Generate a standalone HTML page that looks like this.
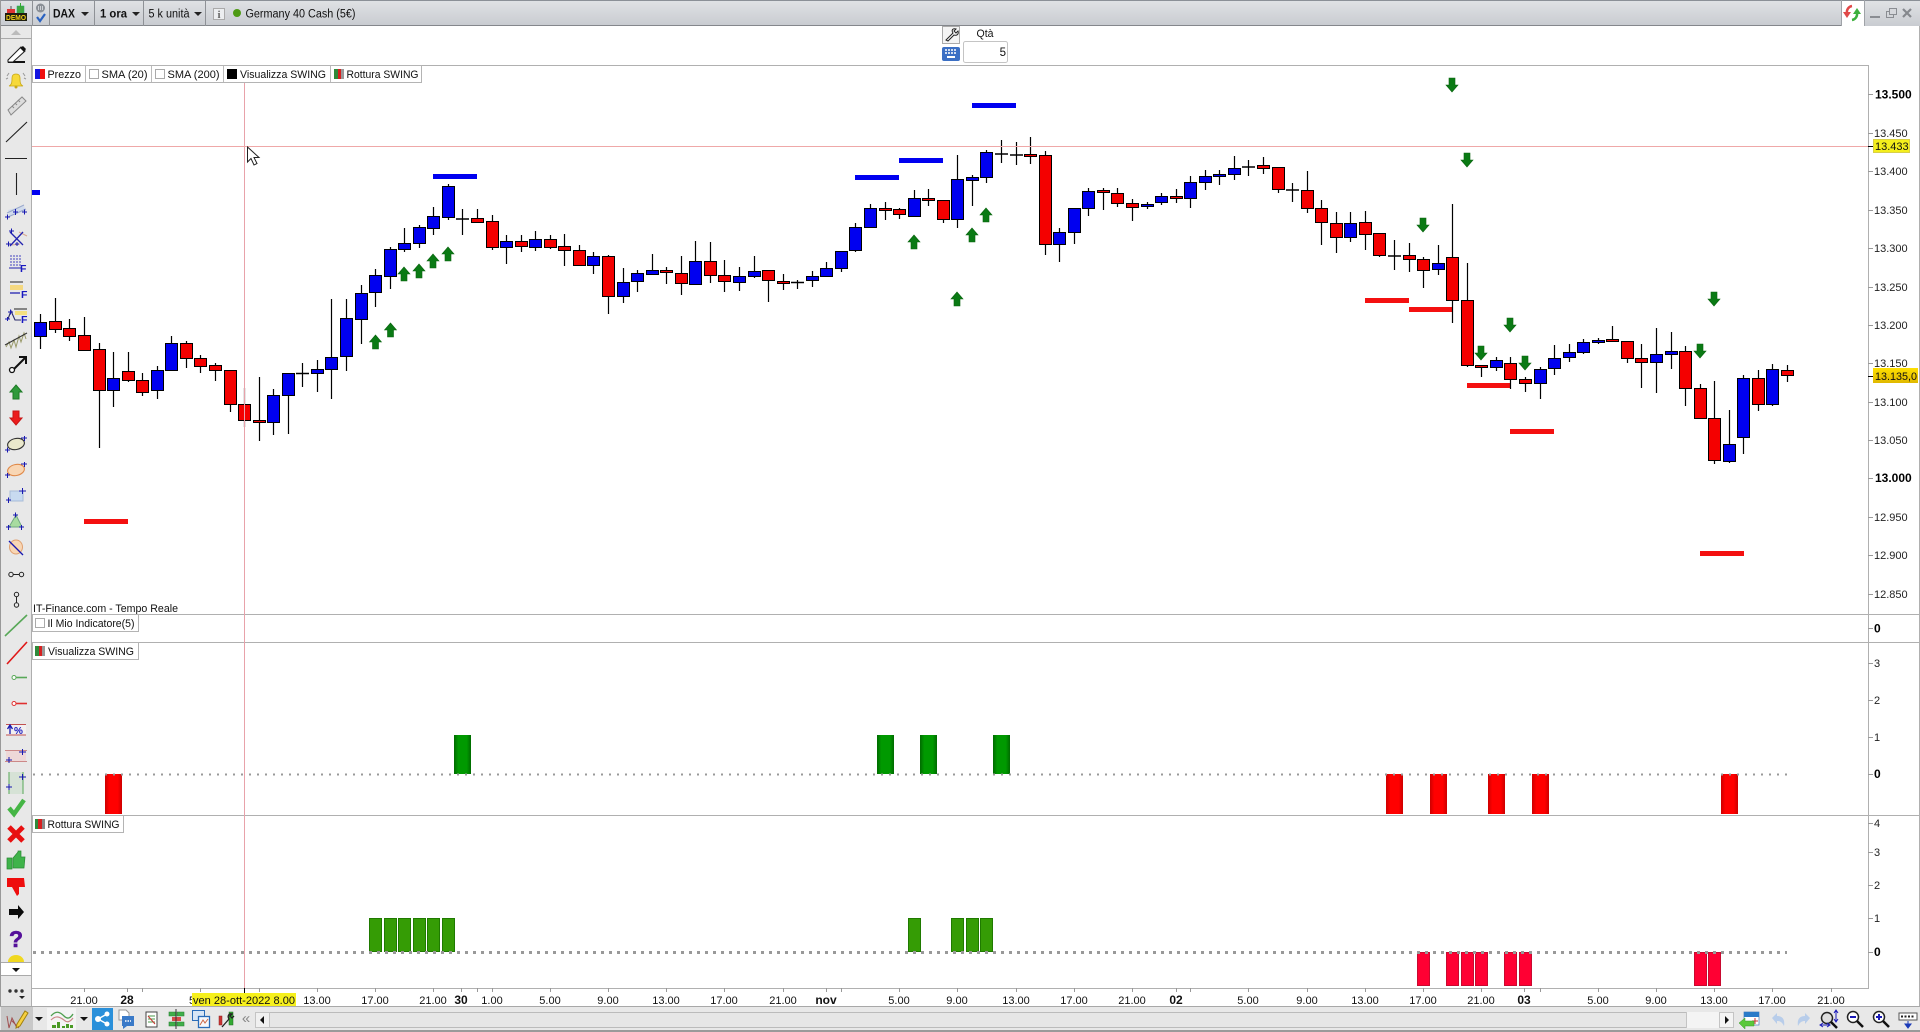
<!DOCTYPE html>
<html><head><meta charset="utf-8"><title>Chart</title>
<style>
html,body{margin:0;padding:0;background:#fff;overflow:hidden}
svg{display:block}
text{font-family:"Liberation Sans",sans-serif;font-size:11px;fill:#111}
.b{font-weight:bold}
.xl text{text-anchor:middle;font-size:11px}
.yl text{font-size:11px;fill:#222}
.yb text{font-size:12px;font-weight:bold;fill:#000}
</style></head><body>
<svg width="1920" height="1032" viewBox="0 0 1920 1032" xmlns="http://www.w3.org/2000/svg">
<defs>
<linearGradient id="tb" x1="0" y1="0" x2="0" y2="1"><stop offset="0" stop-color="#e0e2e5"/><stop offset="1" stop-color="#c9ccd1"/></linearGradient>
<linearGradient id="gb" x1="0" y1="0" x2="1" y2="0"><stop offset="0" stop-color="#006a00"/><stop offset=".25" stop-color="#009900"/><stop offset=".75" stop-color="#009900"/><stop offset="1" stop-color="#006a00"/></linearGradient>
<linearGradient id="rb" x1="0" y1="0" x2="1" y2="0"><stop offset="0" stop-color="#cc0000"/><stop offset=".25" stop-color="#ff0000"/><stop offset=".75" stop-color="#ff0000"/><stop offset="1" stop-color="#cc0000"/></linearGradient>
<linearGradient id="tag2" x1="0" y1="0" x2="0" y2="1"><stop offset="0" stop-color="#ffe000"/><stop offset="1" stop-color="#e0b800"/></linearGradient>
<path id="up" d="M0 0L6 7H3V14H-3V7H-6Z" fill="#0a7a14" stroke="#0a6410" stroke-width=".6"/>
<path id="dn" d="M-3 0H3V7H6L0 14L-6 7H-3Z" fill="#0a7a14" stroke="#0a6410" stroke-width=".6"/>
</defs>

<rect width="1920" height="1032" fill="#fff"/>

<!-- top toolbar -->
<rect x="0" y="0" width="1841" height="25" fill="url(#tb)"/>
<rect x="0" y="0" width="1920" height="1" fill="#8b9097"/>
<rect x="0" y="25" width="1841" height="1" fill="#84878c"/>
<rect x="1841" y="1" width="23" height="25" fill="#fff"/>
<rect x="1864" y="1" width="56" height="25" fill="url(#tb)"/>
<rect x="1841" y="0" width="1" height="26" fill="#a0a3a8"/>
<rect x="1864" y="0" width="1" height="26" fill="#a0a3a8"/>
<g fill="#8e9196">
<rect x="32" y="0" width="1" height="26"/><rect x="49" y="0" width="1" height="26"/><rect x="94" y="0" width="1" height="26"/><rect x="143" y="0" width="1" height="26"/><rect x="205" y="0" width="1" height="26"/>
</g>
<!-- demo icon -->
<rect x="7" y="9" width="8" height="5" fill="#d33"/><path d="M11 6V9" stroke="#555"/>
<rect x="17" y="6" width="7" height="7" fill="#3fa83f" stroke="#2a6" stroke-width=".5"/><path d="M20.500 3V7" stroke="#3a3"/>
<rect x="5" y="13" width="22" height="8" fill="#1d1d10"/>
<text x="16" y="20" text-anchor="middle" class="b" style="font-size:7.500px;fill:#f2d21a" textLength="20" lengthAdjust="spacingAndGlyphs">DEMO</text>
<!-- connection icon -->
<circle cx="40.500" cy="8" r="4.500" fill="#8a8f96"/><path d="M38.500 6V10M40.500 6V10M42.500 6V10" stroke="#dfe2e6" stroke-width=".8"/>
<path d="M37 17L40 21L45 14" fill="none" stroke="#2a62c0" stroke-width="2.200"/>
<text x="53" y="17.500" class="b" style="font-size:11.500px" textLength="22" lengthAdjust="spacingAndGlyphs">DAX</text>
<path d="M81 12H89L85 16Z" fill="#222"/>
<text x="100" y="17.500" class="b" style="font-size:11.500px" textLength="27" lengthAdjust="spacingAndGlyphs">1 ora</text>
<path d="M132 12H140L136 16Z" fill="#222"/>
<text x="148.500" y="17.500" style="font-size:11.500px" textLength="41" lengthAdjust="spacingAndGlyphs">5 k unità</text>
<path d="M194 12H202L198 16Z" fill="#222"/>
<rect x="213.500" y="8.500" width="11" height="11" fill="#eceef0" stroke="#aaa"/>
<text x="219" y="18" text-anchor="middle" class="b" style="font-size:11px;font-family:'Liberation Serif',serif;fill:#666">i</text>
<circle cx="237" cy="13" r="4" fill="#4e9a14"/>
<text x="245.500" y="17.500" style="font-size:11.500px" textLength="110" lengthAdjust="spacingAndGlyphs">Germany 40 Cash (5€)</text>
<!-- refresh -->
<path d="M1852 6A6 6 0 0 0 1847 13" fill="none" stroke="#e04848" stroke-width="2.500"/><path d="M1843 12H1851L1847 18Z" fill="#e04848"/>
<path d="M1852 20A6 6 0 0 0 1857 13" fill="none" stroke="#3db03d" stroke-width="2.500"/><path d="M1853 14H1861L1857 8Z" fill="#3db03d"/>
<!-- window buttons -->
<rect x="1870" y="16" width="10" height="2" fill="#8a8d92"/>
<rect x="1886.500" y="11.500" width="7" height="6" fill="none" stroke="#8a8d92"/><rect x="1889.500" y="8.500" width="7" height="6" fill="#d6d8dc" stroke="#8a8d92"/>
<path d="M1903 9L1911 17M1911 9L1903 17" stroke="#85888d" stroke-width="2.200"/>

<!-- order area -->
<rect x="942.500" y="26.500" width="17" height="17" fill="#f4f4f4" stroke="#aaa"/>
<path d="M946 40L953 33C951 30 953 28 956 29L954 31L956 33L958 31C959 34 957 36 954 35L948 41Z" fill="#fff" stroke="#222"/>
<text x="985" y="37" text-anchor="middle" style="font-size:11px" textLength="17" lengthAdjust="spacingAndGlyphs">Qtà</text>
<rect x="942" y="47" width="18" height="14" rx="2" fill="#3b6fc4"/>
<path d="M945 50H957M945 53H957" stroke="#fff" stroke-width="1.500" stroke-dasharray="2 1"/><rect x="947" y="56" width="8" height="2" fill="#fff"/>
<rect x="963.500" y="41.500" width="44" height="21" rx="2" fill="#fff" stroke="#c4c4c4"/>
<text x="1006" y="56" text-anchor="end" style="font-size:11.500px">5</text>

<!-- left toolbar -->
<rect x="0" y="26" width="32" height="980" fill="#e8e8e8"/>
<rect x="0" y="0" width="1" height="1032" fill="#999"/>
<rect x="31" y="26" width="1" height="980" fill="#aeaeae"/>
<path d="M11 35L16 30L21 35Z" fill="#bbb"/><rect x="1" y="38" width="30" height="1" fill="#aaa"/>

<!-- tool icons -->
<path d="M8 62H25" stroke="#111" stroke-width="2"/><path d="M8 60L21 47L25 51L13 62H8Z" fill="#fff" stroke="#222" stroke-width="1.100"/><path d="M20 48L23 46L26 49L24 52Z" fill="#111"/>
<path d="M9 86C12 85 12 81 12 78C12 75 14 74 16 74C18 74 20 75 20 78C20 81 20 85 23 86Z" fill="#f6d93a" stroke="#c9a814" stroke-width=".8"/><circle cx="16" cy="87" r="1.500" fill="#c9a814"/><path d="M7 76L9 73M25 76L23 73M6 79L8 78M26 79L24 78" stroke="#999"/>
<path d="M8 110L22 97L26 101L11 115Z" fill="#ddd" stroke="#888"/><path d="M12 106L14 108M15 103L17 105M18 100L20 102" stroke="#888"/>
<path d="M6 142L27 122" stroke="#222" stroke-width="1.100"/>
<path d="M5 158.500H27" stroke="#222" stroke-width="1.100"/>
<path d="M16.500 173V195" stroke="#222" stroke-width="1.100"/>
<path d="M8 210L24 206L26 211L9 216Z" fill="#c8d6ee" opacity=".7"/><path d="M7 213L24 205M8 217L26 209" stroke="#99a8cc"/>
<path d="M5 217H10M7.500 214.500V219.500M13 212H18M15.500 209V215M22 212H27M24.500 209.500V214.500" stroke="#1818b0" stroke-width="1"/>
<path d="M19 232L27 236M12 245L20 244" stroke="#d8a890"/><path d="M10 232L23 245M23 232L10 246" stroke="#2424b0" stroke-width="1.300"/>
<path d="M9 231H14M11.500 228.500V233.500M6 244H11M8.500 241.500V246.500M15 244H19M17 242V246" stroke="#1818b0" stroke-width="1"/>
<path d="M10 256H22M10 259H22M10 262H22M10 265H22" stroke="#4444c0" stroke-dasharray="2 1"/><path d="M9 268H21" stroke="#2222b0"/>
<text x="20" y="272" class="b" style="font-size:10.500px;fill:#1818c0">F</text>
<path d="M10 282H23" stroke="#222"/><rect x="10" y="285" width="13" height="5" fill="#f4d880"/><path d="M10 293H20" stroke="#2222b0" stroke-width="1.300"/>
<text x="21" y="298" class="b" style="font-size:10.500px;fill:#1818c0">F</text>
<path d="M8 319L11 311L15 320H21" fill="none" stroke="#2a2a6a" stroke-width="1.100"/><path d="M14 309H27" stroke="#222"/><rect x="15" y="311" width="12" height="4" fill="#f4e080"/>
<path d="M8 312H13M10.500 309.500V314.500M5 319H10M7.500 317V321" stroke="#1818b0"/>
<text x="21" y="323" class="b" style="font-size:10.500px;fill:#1818c0">F</text>
<path d="M6 347L9 342L11 348L14 340L16 347L19 336L21 342L24 333L26 339" fill="none" stroke="#9a9a6a"/><path d="M5 345L27 333" stroke="#333" stroke-width="1"/>
<path d="M14 369L25 358M19 357H26V364" fill="none" stroke="#111" stroke-width="2"/><circle cx="12" cy="370" r="2.500" fill="#fff" stroke="#111" stroke-width="1.300"/>
<path d="M16 385L22 392H19V399H13V392H10Z" fill="#2f9a3a" stroke="#1c7a24"/>
<path d="M13 411H19V418H22L16 425L10 418H13Z" fill="#ec1c1c" stroke="#c81414"/>
<ellipse cx="16" cy="444" rx="8.500" ry="5.500" fill="#eae8cc" stroke="#333" stroke-width="1.100" transform="rotate(-12 16 444)"/><path d="M21 438H27M24.500 436V441M5 450H10M7.500 447.500V452.500" stroke="#1818b0"/>
<ellipse cx="16" cy="470" rx="8.500" ry="5.500" fill="#f8d6b4" stroke="#e08a4a" stroke-width="1.100" transform="rotate(-12 16 470)"/><path d="M21 464H27M24.500 462V467M5 475H10M7.500 473V478" stroke="#1818b0"/>
<rect x="10" y="491" width="13" height="10" fill="#c8daf0" stroke="#a8bcd8"/><path d="M19 491H26M22.500 488V494M6 500H11M8.500 497.500V503" stroke="#1818b0"/>
<path d="M16 515L22 527H9Z" fill="#a8dca0" stroke="#70a880"/><path d="M13 515H18M15.500 512.500V517.500M6 527H11M8.500 525V530M19 527H24M21.500 525V530" stroke="#1818b0"/>
<ellipse cx="16" cy="547" rx="6.500" ry="7" fill="#f8d6b4" stroke="#e0a070"/><path d="M9 541L23 555" stroke="#1818b0" stroke-width="1.300"/>
<g fill="none" stroke="#222"><circle cx="11" cy="574.500" r="2.200"/><circle cx="21.500" cy="574.500" r="2.200"/><path d="M13 574.500H19.500"/>
<circle cx="16.500" cy="594.500" r="2.200"/><circle cx="16.500" cy="605" r="2.200"/><path d="M16.500 597V603"/></g>
<path d="M5 636L27 615" stroke="#58a858" stroke-width="1.600"/>
<path d="M7 664L27 642" stroke="#e01818" stroke-width="1.600"/>
<path d="M16 677.500H27" stroke="#58a858" stroke-width="1.600"/><circle cx="14" cy="677.500" r="2" fill="#fff" stroke="#58a858"/>
<path d="M16 703.500H27" stroke="#e03030" stroke-width="1.600"/><circle cx="14" cy="703.500" r="2" fill="#fff" stroke="#e03030"/>
<rect x="6" y="724" width="20" height="11" fill="#f2f0f0"/><path d="M6 724.500H26M6 735H26" stroke="#c05050"/><path d="M10 734V726M7.500 729L10 725L12.500 729" fill="none" stroke="#1818b0" stroke-width="1.300"/>
<text x="14" y="734" class="b" style="font-size:10px;fill:#1818c0">%</text>
<rect x="6" y="751" width="20" height="10" fill="#eed8d8"/><path d="M5 750.500H27M5 761.500H27" stroke="#c88"/><path d="M19 752H26M22.500 749V755M6 760H12M9 757V763" stroke="#1818b0"/>
<rect x="9" y="772" width="14" height="22" fill="#d6e2d6"/><path d="M9 772V794M23 772V794" stroke="#58a858"/><path d="M19 777H26M22.500 774V780M6 787H12M9 784V790" stroke="#1818b0"/>
<path d="M9 808L14 814L24 800" fill="none" stroke="#45b545" stroke-width="4.500"/>
<path d="M9 827L23 841M23 827L9 841" stroke="#e81010" stroke-width="5"/>
<path d="M7 858H12V869H7ZM13 858L18 852L18 851H21L21 857H25L24 868H13Z" fill="#3fb34a" stroke="#2a8a34" stroke-width=".7"/>
<path d="M7 878H24L25 887H19L19 894L17 896L12 887H7Z" fill="#ee0d0d"/>
<path d="M9 909H18V905L24 912L18 919V915H9Z" fill="#0a0a0a"/>
<text x="16" y="947" text-anchor="middle" class="b" style="font-size:23px;fill:#55109a;stroke:#55109a;stroke-width:.6">?</text>
<path d="M8 962A8 7 0 0 1 24 962Z" fill="#f0d820"/>
<rect x="1" y="962" width="30" height="13" fill="#fff"/><rect x="1" y="962" width="30" height="1" fill="#aaa"/>
<path d="M12 968H20L16 972Z" fill="#111"/><rect x="1" y="975" width="30" height="1" fill="#aaa"/>
<circle cx="10" cy="991" r="1.700" fill="#333"/><circle cx="16" cy="991" r="1.700" fill="#333"/><circle cx="22" cy="991" r="1.700" fill="#333"/><path d="M19 996H25L22 999Z" fill="#222"/>

<!-- grid frame -->
<g fill="#b0b0b0">
<rect x="32" y="65" width="1836" height="1"/>
<rect x="32" y="614" width="1888" height="1"/>
<rect x="32" y="642" width="1888" height="1"/>
<rect x="32" y="815" width="1888" height="1"/>
<rect x="32" y="988" width="1837" height="1"/>
<rect x="1868" y="65" width="1" height="924"/>
<rect x="1919" y="26" width="1" height="980"/>
</g>

<!-- indicator bars -->
<g fill="url(#rb)">
<rect x="105" y="774" width="17" height="40"/><rect x="1386" y="774" width="17" height="40"/><rect x="1430" y="774" width="17" height="40"/><rect x="1488" y="774" width="17" height="40"/><rect x="1532" y="774" width="17" height="40"/><rect x="1721" y="774" width="17" height="40"/>
</g>
<g fill="url(#gb)">
<rect x="454" y="735" width="17" height="39"/><rect x="877" y="735" width="17" height="39"/><rect x="920" y="735" width="17" height="39"/><rect x="993" y="735" width="17" height="39"/>
</g>
<g fill="#359c05" stroke="#1f7a00">
<rect x="369.500" y="918.500" width="12" height="33"/><rect x="384.500" y="918.500" width="12" height="33"/><rect x="398.500" y="918.500" width="12" height="33"/><rect x="413.500" y="918.500" width="12" height="33"/><rect x="427.500" y="918.500" width="12" height="33"/><rect x="442.500" y="918.500" width="12" height="33"/>
<rect x="908.500" y="918.500" width="12" height="33"/><rect x="951.500" y="918.500" width="12" height="33"/><rect x="966.500" y="918.500" width="12" height="33"/><rect x="980.500" y="918.500" width="12" height="33"/>
</g>
<g fill="#ff0033" stroke="#c80a30">
<rect x="1417.500" y="952.500" width="12" height="33"/><rect x="1446.500" y="952.500" width="12" height="33"/><rect x="1461.500" y="952.500" width="12" height="33"/><rect x="1475.500" y="952.500" width="12" height="33"/><rect x="1504.500" y="952.500" width="12" height="33"/><rect x="1519.500" y="952.500" width="12" height="33"/><rect x="1694.500" y="952.500" width="12" height="33"/><rect x="1708.500" y="952.500" width="12" height="33"/>
</g>
<!-- dotted zero lines -->
<path d="M33 774.500H1787" stroke="#999" stroke-width="2" stroke-dasharray="2 6"/>
<path d="M33 952.500H1787" stroke="#999" stroke-width="3" stroke-dasharray="3 5"/>

<!-- signal lines -->
<g fill="#0000f0">
<rect x="32" y="190" width="8" height="5"/><rect x="433" y="174" width="44" height="5"/><rect x="855" y="175" width="44" height="5"/><rect x="899" y="158" width="44" height="5"/><rect x="972" y="103" width="44" height="5"/>
</g>
<g fill="#f41010">
<rect x="84" y="519" width="44" height="5"/><rect x="1365" y="298" width="44" height="5"/><rect x="1409" y="307" width="44" height="5"/><rect x="1467" y="383" width="44" height="5"/><rect x="1510" y="429" width="44" height="5"/><rect x="1700" y="551" width="44" height="5"/>
</g>

<!-- wicks -->
<path fill="none" stroke="#000" stroke-width="1.200" d="M40.500 314V349M55.500 298V333M69.500 319V341M84.500 317V351M99.500 343V448M113.500 352V407M128.500 352V382M142.500 373V396M157.500 366V399M171.500 336V370M186.500 341V368M200.500 355V373M215.500 363V381M230.500 370V412M244.500 388V427M259.500 377V441M273.500 389V435M288.500 373V434M302.500 363V387M317.500 360V392M331.500 299V399M346.500 299V371M361.500 285V344M375.500 269V307M390.500 247V289M404.500 228V252M419.500 225V248M433.500 207V235M448.500 184V220M462.500 209V235M477.500 209V223M492.500 215V250M506.500 235V264M521.500 235V252M535.500 231V251M550.500 235V249M564.500 234V266M579.500 245V266M593.500 252V274M608.500 255V314M623.500 268V303M637.500 270V292M652.500 254V274M666.500 267V284M681.500 256V295M695.500 241V285M710.500 242V283M724.500 260V292M739.500 267V291M754.500 256V278M768.500 270V302M783.500 274V290M797.500 280V289M812.500 271V287M826.500 262V276M841.500 251V272M855.500 223V252M870.500 204V228M885.500 202V220M899.500 208V219M914.500 190V217M928.500 189V206M943.500 200V223M957.500 155V228M972.500 175V206M986.500 150V183M1001.500 140V163M1016.500 142V165M1030.500 137V164M1045.500 151V255M1059.500 228V262M1074.500 208V244M1088.500 188V216M1103.500 188V210M1117.500 188V207M1132.500 199V221M1147.500 202V209M1161.500 193V205M1176.500 189V203M1190.500 176V208M1205.500 170V190M1219.500 170V185M1234.500 156V180M1248.500 160V176M1263.500 157V174M1278.500 167V193M1292.500 183V202M1307.500 171V213M1321.500 200V245M1336.500 212V253M1350.500 212V242M1365.500 211V250M1379.500 233V257M1394.500 240V270M1409.500 243V272M1423.500 257V288M1438.500 245V275M1452.500 204V323M1467.500 263V367M1481.500 365V377M1496.500 357V371M1510.500 357V389M1525.500 377V392M1540.500 367V399M1554.500 345V375M1569.500 344V362M1583.500 339V354M1598.500 338V344M1612.500 326V342M1627.500 341V363M1641.500 344V388M1656.500 328V393M1671.500 332V369M1685.500 346V406M1700.500 384V418M1714.500 381V464M1729.500 410V463M1743.500 375V454M1758.500 370V411M1772.500 364V406M1787.500 365V382"/>
<!-- doji -->
<path fill="none" stroke="#000" stroke-width="1.600" d="M296 373.500h13M456 219h13M791 282.500h13M995 154h13M1010 155h13M1242 167h13M1286 190h13M1388 256h13"/>

<!-- blue bodies -->
<path fill="#0000f0" stroke="#000" stroke-width="1" d="M34.500 322.500h12v14h-12zM107.500 378.500h12v12h-12zM151.500 370.500h12v20h-12zM165.500 343.500h12v27h-12zM267.500 395.500h12v27h-12zM282.500 373.500h12v22h-12zM311.500 369.500h12v4h-12zM325.500 357.500h12v12h-12zM340.500 318.500h12v38h-12zM355.500 293.500h12v26h-12zM369.500 275.500h12v17h-12zM384.500 249.500h12v27h-12zM398.500 243.500h12v6h-12zM413.500 227.500h12v16h-12zM427.500 216.500h12v12h-12zM442.500 186.500h12v31h-12zM500.500 241.500h12v6h-12zM529.500 239.500h12v8h-12zM587.500 256.500h12v9h-12zM617.500 282.500h12v14h-12zM631.500 273.500h12v8h-12zM646.500 270.500h12v4h-12zM689.500 261.500h12v23h-12zM733.500 276.500h12v6h-12zM748.500 271.500h12v5h-12zM806.500 276.500h12v4h-12zM820.500 268.500h12v8h-12zM835.500 251.500h12v17h-12zM849.500 227.500h12v23h-12zM864.500 208.500h12v19h-12zM908.500 198.500h12v18h-12zM951.500 179.500h12v40h-12zM966.500 177.500h12v3h-12zM980.500 152.500h12v25h-12zM1053.500 232.500h12v12h-12zM1068.500 208.500h12v24h-12zM1082.500 191.500h12v17h-12zM1141.500 204.500h12v2h-12zM1155.500 196.500h12v6h-12zM1184.500 182.500h12v16h-12zM1199.500 176.500h12v6h-12zM1213.500 174.500h12v2h-12zM1228.500 168.500h12v6h-12zM1344.500 223.500h12v14h-12zM1432.500 263.500h12v6h-12zM1490.500 360.500h12v7h-12zM1534.500 369.500h12v14h-12zM1548.500 358.500h12v10h-12zM1563.500 352.500h12v5h-12zM1577.500 342.500h12v10h-12zM1592.500 340.500h12v2h-12zM1650.500 354.500h12v8h-12zM1665.500 351.500h12v3h-12zM1723.500 444.500h12v17h-12zM1737.500 378.500h12v59h-12zM1766.500 369.500h12v35h-12z"/>
<!-- red bodies -->
<path fill="#f40000" stroke="#000" stroke-width="1" d="M49.500 321.500h12v8h-12zM63.500 328.500h12v8h-12zM78.500 335.500h12v15h-12zM93.500 349.500h12v41h-12zM122.500 371.500h12v9h-12zM136.500 380.500h12v12h-12zM180.500 343.500h12v15h-12zM194.500 358.500h12v8h-12zM209.500 365.500h12v5h-12zM224.500 370.500h12v34h-12zM238.500 404.500h12v16h-12zM253.500 420.500h12v2h-12zM471.500 218.500h12v4h-12zM486.500 221.500h12v26h-12zM515.500 241.500h12v5h-12zM544.500 239.500h12v8h-12zM558.500 246.500h12v4h-12zM573.500 250.500h12v15h-12zM602.500 256.500h12v40h-12zM660.500 270.500h12v2h-12zM675.500 273.500h12v10h-12zM704.500 261.500h12v14h-12zM718.500 275.500h12v6h-12zM762.500 270.500h12v10h-12zM777.500 281.500h12v2h-12zM879.500 208.500h12v2h-12zM893.500 209.500h12v5h-12zM922.500 198.500h12v2h-12zM937.500 200.500h12v19h-12zM1024.500 154.500h12v2h-12zM1039.500 155.500h12v89h-12zM1097.500 190.500h12v2h-12zM1111.500 193.500h12v10h-12zM1126.500 203.500h12v4h-12zM1170.500 196.500h12v2h-12zM1257.500 165.500h12v3h-12zM1272.500 167.500h12v22h-12zM1301.500 190.500h12v18h-12zM1315.500 208.500h12v14h-12zM1330.500 223.500h12v14h-12zM1359.500 222.500h12v12h-12zM1373.500 233.500h12v22h-12zM1403.500 255.500h12v4h-12zM1417.500 259.500h12v11h-12zM1446.500 257.500h12v43h-12zM1461.500 300.500h12v65h-12zM1475.500 365.500h12v2h-12zM1504.500 363.500h12v16h-12zM1519.500 379.500h12v4h-12zM1606.500 339.500h12v2h-12zM1621.500 341.500h12v17h-12zM1635.500 358.500h12v4h-12zM1679.500 351.500h12v37h-12zM1694.500 388.500h12v30h-12zM1708.500 418.500h12v42h-12zM1752.500 378.500h12v26h-12zM1781.500 370.500h12v5h-12z"/>

<!-- arrows -->
<use href="#up" x="375.500" y="335"/><use href="#up" x="390.500" y="323"/><use href="#up" x="404" y="267"/><use href="#up" x="419" y="264"/><use href="#up" x="433" y="254"/><use href="#up" x="448" y="247"/><use href="#up" x="914" y="235"/><use href="#up" x="972" y="228"/><use href="#up" x="986" y="208"/><use href="#up" x="957" y="292"/>
<use href="#dn" x="1452" y="78"/><use href="#dn" x="1467" y="153"/><use href="#dn" x="1423" y="218"/><use href="#dn" x="1510" y="318"/><use href="#dn" x="1481" y="346"/><use href="#dn" x="1525" y="356"/><use href="#dn" x="1714" y="292"/><use href="#dn" x="1700" y="344"/>

<!-- crosshair -->
<rect x="244" y="83" width="1" height="905" fill="#e8a2aa"/>
<rect x="32" y="146" width="1836" height="1" fill="#efa8a8"/>

<!-- cursor -->
<path d="M247.500 147V162L251 158.500L254 165L257 163.500L254 157.500H259Z" fill="#fff" stroke="#222"/>

<!-- legend top -->
<rect x="32.500" y="65.500" width="389" height="17" fill="#fff" stroke="#b4b4b4"/>
<path d="M85.500 66V82M151.500 66V82M223.500 66V82M330.500 66V82" stroke="#bbb"/>
<rect x="35" y="69" width="5" height="10" fill="#1414e0"/><rect x="40" y="69" width="5" height="10" fill="#f01010"/>
<text x="47.500" y="78" textLength="33.500" lengthAdjust="spacingAndGlyphs">Prezzo</text>
<rect x="89.500" y="69.500" width="9" height="9" fill="#fff" stroke="#aaa"/>
<text x="101.500" y="78" textLength="46" lengthAdjust="spacingAndGlyphs">SMA (20)</text>
<rect x="155.500" y="69.500" width="9" height="9" fill="#fff" stroke="#aaa"/>
<text x="167.500" y="78" textLength="52" lengthAdjust="spacingAndGlyphs">SMA (200)</text>
<rect x="227" y="69" width="10" height="10" fill="#000"/>
<text x="240" y="78" textLength="86" lengthAdjust="spacingAndGlyphs">Visualizza SWING</text>
<rect x="334" y="69" width="4" height="10" fill="#2f8a3a"/><rect x="338" y="69" width="3" height="10" fill="#d62020"/><rect x="341" y="69" width="3" height="10" fill="#999"/>
<text x="346.500" y="78" textLength="72" lengthAdjust="spacingAndGlyphs">Rottura SWING</text>

<text x="33" y="612" textLength="145" lengthAdjust="spacingAndGlyphs">IT-Finance.com - Tempo Reale</text>

<rect x="32.500" y="614.500" width="106" height="17" fill="#fff" stroke="#b4b4b4"/>
<rect x="35.500" y="618.500" width="9" height="9" fill="#fff" stroke="#aaa"/>
<text x="47.500" y="627" textLength="87" lengthAdjust="spacingAndGlyphs">Il Mio Indicatore(5)</text>
<rect x="32.500" y="642.500" width="106" height="17" fill="#fff" stroke="#b4b4b4"/>
<rect x="35" y="646" width="4" height="10" fill="#2f8a3a"/><rect x="39" y="646" width="3" height="10" fill="#d62020"/><rect x="42" y="646" width="3" height="10" fill="#999"/>
<text x="48" y="655" textLength="86" lengthAdjust="spacingAndGlyphs">Visualizza SWING</text>
<rect x="32.500" y="815.500" width="91" height="17" fill="#fff" stroke="#b4b4b4"/>
<rect x="35" y="819" width="3" height="10" fill="#2f8a3a"/><rect x="38" y="819" width="4" height="10" fill="#d62020"/><rect x="42" y="819" width="3" height="10" fill="#888"/>
<text x="47.500" y="828" textLength="72" lengthAdjust="spacingAndGlyphs">Rottura SWING</text>

<!-- y ticks -->
<path stroke="#999" d="M1868 94.500h5M1868 133.500h5M1868 171.500h5M1868 210.500h5M1868 248.500h5M1868 287.500h5M1868 325.500h5M1868 363.500h5M1868 402.500h5M1868 440.500h5M1868 478.500h5M1868 517.500h5M1868 555.500h5M1868 594.500h5M1868 628.500h5M1868 663.500h5M1868 700.500h5M1868 737.500h5M1868 774.500h5M1868 823.500h5M1868 852.500h5M1868 885.500h5M1868 918.500h5M1868 952.500h5"/>
<path stroke="#000" d="M1868 146.500h5M1868 376.500h5"/>
<g class="yb">
<text x="1875" y="98.500">13.500</text><text x="1875" y="482">13.000</text>
<text x="1874" y="632.500">0</text><text x="1874" y="778">0</text><text x="1874" y="956">0</text>
</g>
<g class="yl">
<text x="1874" y="137">13.450</text><text x="1874" y="175">13.400</text><text x="1874" y="214">13.350</text><text x="1874" y="252">13.300</text><text x="1874" y="291">13.250</text><text x="1874" y="329">13.200</text><text x="1874" y="367">13.150</text><text x="1874" y="406">13.100</text><text x="1874" y="444">13.050</text><text x="1874" y="521">12.950</text><text x="1874" y="559">12.900</text><text x="1874" y="598">12.850</text>
<text x="1874" y="667">3</text><text x="1874" y="704">2</text><text x="1874" y="741">1</text>
<text x="1874" y="827">4</text><text x="1874" y="856">3</text><text x="1874" y="889">2</text><text x="1874" y="922">1</text>
</g>
<rect x="1873.500" y="139.500" width="36" height="13" fill="#f4ee1c" stroke="#d8d048"/>
<text x="1875" y="150">13.433</text>
<rect x="1873" y="368" width="45" height="15" fill="url(#tag2)"/>
<text x="1875" y="380" textLength="42" lengthAdjust="spacingAndGlyphs">13.135,0</text>

<!-- x axis -->
<path stroke="#999" d="M84.500 988v4M127.500 988v4M142.500 988v4M200.500 988v4M259.500 988v4M317.500 988v4M375.500 988v4M433.500 988v4M461.500 988v4M477.500 988v4M492.500 988v4M550.500 988v4M608.500 988v4M666.500 988v4M724.500 988v4M783.500 988v4M826.500 988v4M841.500 988v4M899.500 988v4M957.500 988v4M1016.500 988v4M1074.500 988v4M1132.500 988v4M1176.500 988v4M1190.500 988v4M1248.500 988v4M1307.500 988v4M1365.500 988v4M1423.500 988v4M1481.500 988v4M1524.500 988v4M1540.500 988v4M1598.500 988v4M1656.500 988v4M1714.500 988v4M1772.500 988v4M1831.500 988v4"/>
<path stroke="#000" d="M244.500 988v5"/>
<g class="xl">
<text x="84" y="1004">21.00</text><text x="317" y="1004">13.00</text><text x="375" y="1004">17.00</text><text x="433" y="1004">21.00</text><text x="492" y="1004">1.00</text><text x="550" y="1004">5.00</text><text x="608" y="1004">9.00</text><text x="666" y="1004">13.00</text><text x="724" y="1004">17.00</text><text x="783" y="1004">21.00</text><text x="899" y="1004">5.00</text><text x="957" y="1004">9.00</text><text x="1016" y="1004">13.00</text><text x="1074" y="1004">17.00</text><text x="1132" y="1004">21.00</text><text x="1248" y="1004">5.00</text><text x="1307" y="1004">9.00</text><text x="1365" y="1004">13.00</text><text x="1423" y="1004">17.00</text><text x="1481" y="1004">21.00</text><text x="1598" y="1004">5.00</text><text x="1656" y="1004">9.00</text><text x="1714" y="1004">13.00</text><text x="1772" y="1004">17.00</text><text x="1831" y="1004">21.00</text>
<text x="127" y="1004" class="b" style="font-size:12px">28</text><text x="461" y="1004" class="b" style="font-size:12px">30</text><text x="826" y="1004" class="b" style="font-size:12px">nov</text><text x="1176" y="1004" class="b" style="font-size:12px">02</text><text x="1524" y="1004" class="b" style="font-size:12px">03</text>
<text x="192" y="1004" style="font-size:11px">5</text>
</g>
<rect x="192" y="993" width="104" height="14" fill="#f6f01c"/>
<text x="244" y="1004" text-anchor="middle" style="font-size:11px" textLength="102" lengthAdjust="spacingAndGlyphs">ven 28-ott-2022 8.00</text>

<!-- bottom toolbar -->
<rect x="0" y="1007" width="1920" height="25" fill="#e8e8e8"/>
<rect x="0" y="1006" width="1920" height="1" fill="#a8a8a8"/>
<rect x="0" y="1030" width="1920" height="2" fill="#9a9a9a"/>
<rect x="1" y="1007" width="32" height="23" fill="#c8c8c8"/>
<path d="M9 1028L7 1016M9 1028L12 1018L17 1028M11 1020L19 1028" stroke="#a05050" fill="none"/>
<path d="M17 1024L25 1011L28 1013L20 1026L16 1028Z" fill="#f6d040" stroke="#a08010"/>
<path d="M35 1017H43L39 1021Z" fill="#111"/>
<rect x="47" y="1008" width="29" height="22" fill="#f4f4f4"/>
<path d="M51 1016C56 1010 60 1012 64 1016C67 1019 70 1019 73 1014" fill="none" stroke="#4f9f4f" stroke-width="1.300"/>
<path d="M51 1020C56 1015 60 1017 64 1020C67 1023 70 1022 73 1018" fill="none" stroke="#c88" stroke-width="1.200"/>
<path d="M52 1028V1025H56V1028ZM57 1028V1022H60V1028ZM62 1028V1026H65V1028ZM66 1028V1024H69V1028ZM70 1028V1025H73V1028Z" fill="#4a9a24"/>
<path d="M80 1017H88L84 1021Z" fill="#111"/>
<rect x="92" y="1008" width="21" height="22" fill="#2a90da"/>
<path d="M98 1019L107 1014M98 1019L107 1024" stroke="#fff" stroke-width="1.400"/><circle cx="98" cy="1019" r="3" fill="#fff"/><circle cx="107" cy="1014" r="2.500" fill="#fff"/><circle cx="107" cy="1024" r="2.500" fill="#fff"/>
<path d="M119 1010H126L129 1013V1020H119Z" fill="#fff" stroke="#999"/>
<path d="M122 1016H134V1026H127L123 1029V1026H122Z" fill="#3a7ac8"/><path d="M125 1021H131" stroke="#fff" stroke-width="1.500" stroke-dasharray="1.500 1"/>
<rect x="146" y="1012" width="11" height="15" fill="#fff" stroke="#444"/><path d="M148 1016H155M148 1019H155M148 1022H155" stroke="#4a9a4a"/><path d="M148 1016L155 1024" stroke="#c33"/>
<path d="M169 1012H176V1016H169ZM177 1012H184V1016H177ZM169 1022H176V1026H169ZM177 1022H184V1026H177Z" fill="#3fae4a" stroke="#2a8034" stroke-width=".6"/><path d="M172 1017H181V1021H172Z" fill="#d84a4a"/><path d="M176 1009V1029" stroke="#333"/>
<rect x="192.500" y="1010.500" width="12" height="10" fill="#d8e6f6" stroke="#2a6cb8"/><rect x="198.500" y="1016.500" width="11" height="11" fill="#f6f8fc" stroke="#2a6cb8" stroke-width="1.300"/><path d="M200 1025L203 1020L205 1023L208 1019" fill="none" stroke="#c64"/>
<rect x="219" y="1016" width="3" height="9" fill="#c33" stroke="#822" stroke-width=".5"/><rect x="229" y="1012" width="4" height="13" fill="#3a3" stroke="#262" stroke-width=".5"/>
<path d="M222 1027L229 1019C227 1016 229 1013 232 1014L230 1016L232 1018L234 1016" fill="none" stroke="#222" stroke-width="1.300"/>
<text x="246" y="1023" text-anchor="middle" style="font-size:15px;fill:#888">«</text>
<rect x="255.500" y="1012.500" width="14" height="15" fill="#f0f0f0" stroke="#c4c4c4"/>
<path d="M264 1016V1024L260 1020Z" fill="#111"/>
<rect x="270" y="1012" width="1450" height="1" fill="#bbb"/><rect x="270" y="1027" width="1450" height="1" fill="#bbb"/>
<rect x="270" y="1013" width="1416" height="14" fill="#e6e6e6"/>
<rect x="1686" y="1012" width="33" height="16" fill="#f4f4f4"/><rect x="1686" y="1012" width="1" height="16" fill="#c4c4c4"/>
<rect x="1719.500" y="1012.500" width="14" height="15" fill="#f4f4f4" stroke="#c4c4c4"/>
<path d="M1725 1016V1024L1729 1020Z" fill="#111"/>
<!-- right icons -->
<rect x="1744" y="1012" width="15" height="13" fill="#fff" stroke="#4a7ab8" stroke-width=".7"/><rect x="1744" y="1012" width="15" height="5" fill="#2a7ac8"/><path d="M1752 1021H1758M1755 1018V1024" stroke="#c33"/>
<path d="M1739 1023L1745 1018V1021H1754V1026H1745V1029Z" fill="#5ac83a" stroke="#3a9a2a" stroke-width=".5"/>
<path d="M1772 1018L1777 1013V1016C1783 1016 1785 1020 1784 1026C1782 1022 1780 1021 1777 1021V1024Z" fill="#b8cdea"/>
<path d="M1810 1018L1805 1013V1016C1799 1016 1797 1020 1798 1026C1800 1022 1802 1021 1805 1021V1024Z" fill="#b8cdea"/>
<circle cx="1827" cy="1018" r="5.500" fill="#ddd" stroke="#222" stroke-width="1.500"/><path d="M1831 1022L1837 1028" stroke="#111" stroke-width="2.500"/>
<path d="M1836 1011V1021M1834 1013L1836 1010L1838 1013M1834 1019L1836 1022L1838 1019M1821 1025H1829M1823 1023L1820 1025L1823 1027M1827 1023L1830 1025L1827 1027" stroke="#1a1ab8" fill="none"/>
<circle cx="1853" cy="1017" r="5.500" fill="#fff" stroke="#222" stroke-width="1.500"/><path d="M1857 1021L1863 1027" stroke="#111" stroke-width="2.500"/><path d="M1850 1017H1856" stroke="#1a1ab8" stroke-width="2"/>
<circle cx="1879" cy="1017" r="5.500" fill="#fff" stroke="#222" stroke-width="1.500"/><path d="M1883 1021L1889 1027" stroke="#111" stroke-width="2.500"/><path d="M1876 1017H1882M1879 1014V1020" stroke="#1a1ab8" stroke-width="2"/>
<rect x="1899" y="1013" width="18" height="7" fill="#fff" stroke="#555"/><path d="M1901 1016.500H1915" stroke="#222" stroke-width="2" stroke-dasharray="2 1.500"/>
<path d="M1908 1021V1025M1905 1024H1911L1908 1028Z" fill="#1a3ab8" stroke="#1a3ab8"/>
</svg>
</body></html>
